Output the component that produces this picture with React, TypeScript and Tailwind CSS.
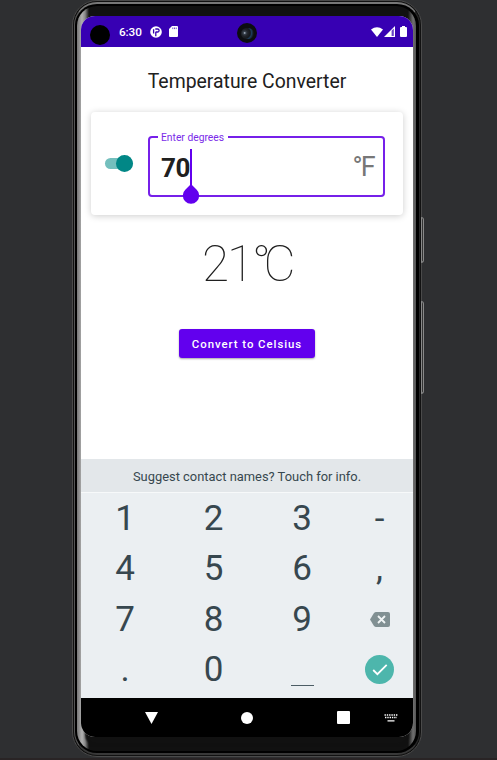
const keys = ["1", "2", "3", "-", "4", "5", "6", ",", "7", "8", "9", "del", ".", "0", "_", "ok"];

function StatusBar() {
  return (
    <div className="relative flex h-[31px] shrink-0 items-center bg-[#3700b3] text-white">
      <div className="ml-[9px] mt-[7px] h-[20px] w-[20px] rounded-full bg-black" />
      <span className="ml-[9px] mt-[2px] w-[23px] whitespace-nowrap text-[11.8px] leading-none font-medium tracking-[-0.1px]">6:30</span>
      <svg className="ml-[8px]" width="12" height="12" viewBox="0 0 12 12">
        <circle cx="6" cy="6" r="5.8" fill="#fff" />
        <path d="M3.6 3.3v4.2M5.8 5.8V10.2M5.3 3H7.6a1.5 1.5 0 0 1 0 3H5.8" fill="none" stroke="#3700b3" strokeWidth="1.3" />
      </svg>
      <svg className="ml-[7px]" width="9" height="11" viewBox="0 0 9 11">
        <path d="M3 0h5q1 0 1 1v9q0 1-1 1H1q-1 0-1-1V3z" fill="#fff" />
        <path d="M3.8 1.5v1.6M5.5 1.5v1.6M7.2 1.5v1.6" stroke="#3700b3" strokeWidth=".7" />
      </svg>
      <div className="absolute left-[156px] top-[7px] flex h-[20px] w-[20px] items-center justify-center rounded-full bg-[#0c0d10]">
        <div className="h-[11px] w-[13px] rounded-full bg-[radial-gradient(circle_at_28%_45%,#c9d5e5_0,#39424d_12%,#20242a_28%,#15171b_50%,#1d3d5c_62%,#131419_80%)]" />
      </div>
      <div className="ml-auto mr-[6px] flex items-center">
        <svg width="12" height="10" viewBox="0 0 12 10"><path d="M6 10 0 2.4Q6-2 12 2.4z" fill="#fff" /></svg>
        <svg className="ml-[1px]" width="11" height="11" viewBox="0 0 11 11">
          <path d="M0 11 11 0v11z" fill="#fff" /><path d="M7.6 4.8 9.8 2.6V10H7.6z" fill="#6841c5" />
        </svg>
        <svg className="ml-[5px]" width="7" height="11" viewBox="0 0 7 11"><path d="M2 0h3v1h1q1 0 1 1v8q0 1-1 1H1q-1 0-1-1V2q0-1 1-1h1z" fill="#fff" /></svg>
      </div>
    </div>
  );
}

function InputCard() {
  return (
    <div className="mx-[10px] mt-[18px] flex h-[103px] shrink-0 rounded-[4px] bg-white pl-[14px] shadow-[0_1px_7px_rgba(0,0,0,0.2)]">
      <div className="mt-[43px] flex h-[17px] w-[28px] items-center justify-end">
        <div className="flex h-[11px] w-[28px] items-center justify-end rounded-full bg-[#74bfbd]">
          <div className="h-[17px] w-[17px] shrink-0 rounded-full bg-[#018786]" />
        </div>
      </div>
      <div className="relative ml-[15px] mt-[24px] flex h-[61px] w-[237px] items-center justify-between rounded-[4px] border-2 border-[#7620e9] pl-[11px] pr-[9px]">
        <span className="absolute left-[8px] top-[-7px] bg-white pl-[3px] pr-[4px] text-[10.3px] leading-[13px] whitespace-nowrap text-[#7b2be9]">Enter degrees</span>
        <span className="mt-[2px] text-[26px] leading-none font-bold tracking-[-0.3px] text-[#202020]">70</span>
        <span className="mt-[2px] text-[27px] leading-none tracking-[-1.8px] text-[#777]">°F</span>
        <div className="absolute left-[40px] top-[11px] h-[37px] w-[2px] bg-[#6200ee]" />
        <svg className="absolute left-[32px] top-[46px]" width="18" height="20" viewBox="0 0 18 20">
          <path d="M9 0 14.5 5.4A8.2 8.2 0 1 1 3.5 5.4z" fill="#6200ee" />
        </svg>
      </div>
    </div>
  );
}

function Key({ label }: { label: string }) {
  if (label === "del")
    return (
      <svg width="20" height="15" viewBox="0 0 20 15">
        <path d="M6 0h12q2 0 2 2v11q0 2-2 2H6Q5 15 4 14L0 7.5 4 1Q5 0 6 0z" fill="#819093" />
        <path d="m8 4 7 7m0-7-7 7" stroke="#f0f4f5" strokeWidth="1.8" />
      </svg>
    );
  if (label === "ok")
    return (
      <svg width="29" height="29" viewBox="0 0 29 29">
        <circle cx="14.5" cy="14.5" r="14.5" fill="#4db6ac" />
        <path d="m8.2 15 4.2 4.2 9.3-9.3" fill="none" stroke="#fff" strokeWidth="1.8" />
      </svg>
    );
  if (label === "_") return <div className="mt-[31px] h-px w-[23px] bg-[#4c5d65]" />;
  return <span className="text-[35px] leading-none text-[#37474f]">{label}</span>;
}

function Keyboard() {
  return (
    <div className="mt-auto flex h-[239px] shrink-0 flex-col bg-[#ebeff2]">
      <div className="flex h-[34px] shrink-0 items-center justify-center border-b border-[#f7f9fa] bg-[#e3e7ea] pt-[2px] text-[12.9px] whitespace-nowrap text-[#37474f]">
        Suggest contact names? Touch for info.
      </div>
      <div className="grid h-[202px] grid-cols-[88px_89px_88px_67px] grid-rows-4">
        {keys.map((k) => (
          <div key={k} className="flex items-center justify-center"><Key label={k} /></div>
        ))}
      </div>
    </div>
  );
}

function NavBar() {
  return (
    <div className="flex h-[39px] shrink-0 items-center bg-black">
      <svg className="ml-[64px]" width="13" height="12" viewBox="0 0 13 12"><path d="M0 0h13L6.5 12z" fill="#fff" /></svg>
      <div className="ml-[83px] h-[12px] w-[12px] rounded-full bg-white" />
      <div className="ml-[84px] h-[13px] w-[13px] rounded-[1px] bg-white" />
      <svg className="ml-[34px]" width="14" height="8" viewBox="0 0 14 8">
        <path d="M.5 1h13M1 3.5h12" stroke="#fff" strokeWidth="1.3" strokeDasharray="1.4 .9" /><path d="M3.5 6.8h7" stroke="#fff" strokeWidth="1.2" />
      </svg>
    </div>
  );
}

export default function App() {
  return (
    <div className="flex h-[760px] w-[497px] items-start overflow-hidden border-b-2 border-[#292425] bg-[#2e2f31] font-[Roboto,sans-serif]">
      <div className="relative ml-[72px] h-[757px] w-[350px] shrink-0 rounded-[25px] border border-[#4a4a4a] bg-[#111] p-px">
        <div className="absolute left-[348px] top-[216px] h-[46px] w-[3px] rounded-r-sm border border-[#888] bg-[#333]" />
        <div className="absolute left-[348px] top-[300px] h-[93px] w-[3px] rounded-r-sm border border-[#888] bg-[#333]" />
        <div className="h-full rounded-[23px] border-t-2 border-r border-b-2 border-l border-t-[#777] border-r-[#292929] border-b-[#383838] border-l-[#555] bg-black pt-[2px] pr-[3px] pb-[2px] pl-[2px]">
          <div className="h-full rounded-[20px] bg-[linear-gradient(90deg,#777_0,#b0b0b0_5px,#8a8a8a_8px,#111_12px,#111_331px,#707070_336px,#555_100%)] pt-[10px]">
            <div className="mx-[4px] h-[721px] w-[332px] rounded-[14px] bg-white shadow-[0_12px_2px_-4px_#111]">
              <div className="flex h-full flex-col overflow-hidden rounded-[14px]">
                <StatusBar />
                <h1 className="mt-[23px] text-center text-[19.4px] leading-[24px] whitespace-nowrap text-[#202020]">Temperature Converter</h1>
                <InputCard />
                <div className="mt-[20px] flex justify-center pr-[4px] text-[49.5px] leading-[58px] font-thin text-[#202020]">
                  <span className="tracking-[-2px]">21</span>
                  <span className="tracking-[-7.5px]">°C</span>
                </div>
                <button className="mx-auto mt-[36px] h-[29px] w-[136px] shrink-0 rounded-[3px] bg-[#6200ee] pt-[2px] text-[11.4px] font-medium tracking-[0.95px] whitespace-nowrap text-white shadow-[0_1px_2px_rgba(0,0,0,0.35)]">Convert to Celsius</button>
                <Keyboard />
                <NavBar />
              </div>
            </div>
          </div>
        </div>
      </div>
    </div>
  );
}
